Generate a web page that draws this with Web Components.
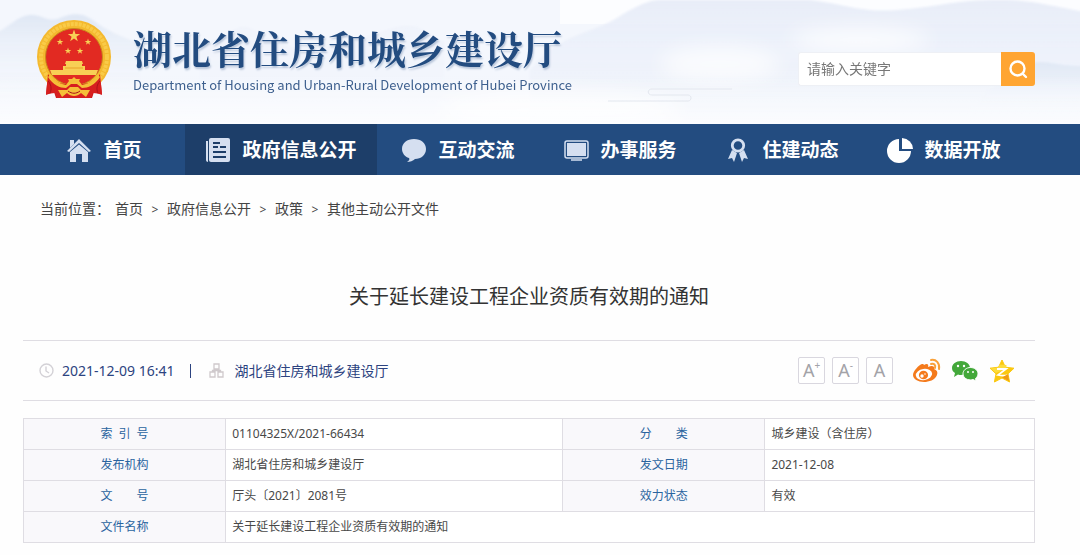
<!DOCTYPE html>
<html lang="zh-CN">
<head>
<meta charset="utf-8">
<meta name="viewport" content="width=device-width, initial-scale=1">
<title>关于延长建设工程企业资质有效期的通知</title>
<style>
  body {
    margin: 0;
    background: #fefefe;
    color: #444;
    font-family: "Noto Sans", "Noto Sans CJK SC", sans-serif;
    font-size: 14px;
    line-height: 20px;
    --edge-left: 23px;
    --edge-right: 45px;
    --rule: #dfdde3;
    --navy: #234c80;
  }
</style>
</head>
<body>
<site-header></site-header>
<site-nav></site-nav>
<main>
  <bread-crumb></bread-crumb>
  <notice-article>
    <span slot="title">关于延长建设工程企业资质有效期的通知</span>
    <article-meta></article-meta>
    <info-table></info-table>
  </notice-article>
</main>

<template id="t-emblem">
  <style>
    :host { display: block; width: 74px; height: 80px; flex: none; }
    svg { display: block; }
  </style>
  <svg width="74" height="80" viewBox="0 0 74 80" role="img" aria-label="国徽">
    <defs>
      <path id="star" d="M0-10 2.3-3.1 9.5-3.1 3.7 1.2 5.9 8.1 0 3.8-5.9 8.1-3.7 1.2-9.5-3.1-2.3-3.1Z"/>
    </defs>
    <path d="M11 55 9 76l8-3 2 6h36l2-6 8 3-2-21Z" fill="#c91a1c"/>
    <circle cx="37" cy="38" r="37" fill="#f4b92f"/>
    <circle cx="37" cy="38" r="33" fill="none" stroke="#f9cb48" stroke-width="4" stroke-dasharray="3 1"/>
    <circle cx="37" cy="38" r="28.500" fill="#e22a22" stroke="#c98a1c"/>
    <g fill="#f8cf55">
      <use href="#star" transform="translate(37 17) scale(.65)"/>
      <use href="#star" transform="translate(23 23) scale(.35)"/>
      <use href="#star" transform="translate(51 23) scale(.35)"/>
      <use href="#star" transform="translate(31 32) scale(.35)"/>
      <use href="#star" transform="translate(43 32) scale(.35)"/>
      <path d="M29 42h16l1 3H28ZM29 45h16v2h3v4h13l-2 5H15l-2-5h13v-4h3Z"/>
    </g>
    <path d="M28 49h18" stroke="#e9a22b"/>
    <path d="M11 55c5 8 12 10 19 10l14 0c7 0 14-2 19-10l2 20-9-1-2 5H20l-2-5-9 1Z" fill="#d71f1f"/>
    <path d="M13 56c5 7 11 9 16 10l3-4-1-2h4l2-2 2 2h4l-1 2 3 4c5-1 11-3 16-10l2 2c-5 8-12 11-18 11l-5-4H34l-5 4c-6 0-13-3-18-11Z" fill="#f5bf38"/>
    <path d="M21 71h9l3-3h8l3 3h9l-4 7-5-4c-4 4-10 4-14 0l-5 4Z" fill="#f5bf38"/>
    <path d="M11 62c3 3 4 8 2 12M63 62c-3 3-4 8-2 12M31 72c4 3 8 3 12 0" fill="none" stroke="#a91219"/>
  </svg>
</template>

<template id="t-header">
  <style>
    :host { display: block; position: relative; overflow: hidden; background: #f4f7fd; }
    .scene { position: absolute; inset: 0; width: 100%; height: 100%; }
    header {
      position: relative; display: flex; align-items: center; justify-content: space-between;
      min-height: 124px; box-sizing: border-box; padding: 0 var(--edge-right) 0 37px;
    }
    .brand { display: flex; align-items: flex-start; gap: 22px; color: var(--navy); padding-bottom: 6px; }
    h1 {
      margin: 0; font: 700 39px/56px "Noto Serif CJK SC", "Noto Sans CJK SC", serif;
      text-shadow: 1px 2px 2px #b9c6da; white-space: nowrap;
    }
    p { margin: 0; font: 400 13px/20px "Noto Sans CJK SC", sans-serif; color: #3d5f8e; white-space: nowrap; }
    form { display: flex; height: 34px; width: 237px; margin-top: 14px; }
    input {
      flex: 1; min-width: 0; box-sizing: border-box; border: 1px solid #eef0f5; border-right: 0;
      border-radius: 3px 0 0 3px; background: #fff; padding: 0 8px; font: inherit; color: #444; outline: 0;
    }
    input::placeholder { color: #777; opacity: 1; }
    button {
      width: 34px; border: 0; padding: 0; background: #ffa532; border-radius: 0 3px 3px 0;
      display: grid; place-items: center;
    }
  </style>
  <svg class="scene" viewBox="0 0 1080 124" preserveAspectRatio="none" aria-hidden="true">
    <defs>
      <linearGradient id="m" x2="0" y2="1"><stop stop-color="#dfe7f4"/><stop offset="1" stop-color="#f6f9fe" stop-opacity="0"/></linearGradient>
      <linearGradient id="n" x2="0" y2="1"><stop stop-color="#e8edf8"/><stop offset="1" stop-color="#eef3fc" stop-opacity=".3"/></linearGradient>
      <linearGradient id="w" x2="0" y2="1"><stop offset=".6" stop-color="#fff" stop-opacity="0"/><stop offset="1" stop-color="#fff" stop-opacity=".7"/></linearGradient>
      <filter id="soft"><feGaussianBlur stdDeviation="1"/></filter>
      <filter id="mist" x="-30%" y="-100%" width="160%" height="300%"><feGaussianBlur stdDeviation="10"/></filter>
    </defs>
    <path d="M560 0h520v24H560Z" fill="#fcfdff"/>
    <g filter="url(#soft)">
      <path d="M-5 34C10 26 18 16 30 15s18 8 30 3 22-6 34 3 26 16 46 22v60H-5Z" fill="url(#m)"/>
      <path d="M200 45c20-4 34-18 44-18s18 12 40 18 60 0 100-14 40 6 60 10v50H200Z" fill="url(#n)" opacity=".4"/>
      <path d="M530 70c30-38 60-34 90-54 20-12 30-16 40-16h150c20 2 40 8 60 10s50-2 75-6 40-4 60-4 40 4 80 12v120H530Z" fill="url(#n)"/>
      <path d="M970 110c20-20 40-44 60-47s25 3 55 3v50H970Z" fill="url(#m)"/>
    </g>
    <g filter="url(#mist)" fill="#fff">
      <ellipse cx="720" cy="64" rx="60" ry="18" opacity=".7"/>
      <ellipse cx="860" cy="40" rx="70" ry="12" opacity=".8"/>
      <ellipse cx="560" cy="110" rx="120" ry="20" opacity=".7"/>
    </g>
    <rect width="1080" height="124" fill="url(#w)"/>
    <path d="M608 101h80c4 0 4-6 0-6h-36c-5 0-5-6 0-6h80" fill="none" stroke="#e3e7ee"/>
  </svg>
  <header>
    <div class="brand">
      <state-emblem></state-emblem>
      <div>
        <h1>湖北省住房和城乡建设厅</h1>
        <p lang="en">Department of Housing and Urban-Rural Development of Hubei Province</p>
      </div>
    </div>
    <form role="search">
      <input type="text" placeholder="请输入关键字" aria-label="请输入关键字">
      <button type="button" aria-label="搜索">
        <svg width="20" height="20" viewBox="0 0 20 20" fill="none" stroke="#fff" stroke-width="2.400" stroke-linecap="round"><circle cx="9.500" cy="9.500" r="7"/><path d="m15 15 3 3"/></svg>
      </button>
    </form>
  </header>
</template>

<template id="t-nav">
  <style>
    :host { display: block; background: var(--navy); }
    nav {
      display: grid; grid-template-columns: 162fr 192fr 162fr 162fr 162fr 162fr;
      padding: 0 55px 0 var(--edge-left);
    }
  </style>
  <nav aria-label="主导航">
    <nav-item icon="home">首页</nav-item>
    <nav-item icon="news" active>政府信息公开</nav-item>
    <nav-item icon="chat">互动交流</nav-item>
    <nav-item icon="screen">办事服务</nav-item>
    <nav-item icon="medal">住建动态</nav-item>
    <nav-item icon="pie">数据开放</nav-item>
  </nav>
</template>

<template id="t-nav-item">
  <style>
    :host { display: block; }
    :host([active]) { background: #1d3e69; }
    a {
      display: flex; align-items: center; justify-content: center; gap: 11px; height: 51px;
      color: #fff; text-decoration: none; white-space: nowrap;
      font: 700 19px/28px "Noto Sans CJK SC", sans-serif;
    }
    span { padding-bottom: 2px; }
    svg { flex: none; width: 26px; height: 26px; }
  </style>
  <a href="#"><svg viewBox="0 0 26 26" aria-hidden="true"></svg><span><slot></slot></span></a>
</template>

<template id="t-crumb">
  <style>
    :host { display: block; padding: 24px var(--edge-right) 0 40px; }
    nav { display: flex; }
    span { width: 75px; }
    ol { display: flex; margin: 0; padding: 0; list-style: none; }
    li + li::before { content: ">"; display: inline-block; width: 24px; text-align: center; font-size: 12px; }
    a { color: inherit; text-decoration: none; }
  </style>
  <nav aria-label="面包屑">
    <span>当前位置：</span>
    <ol>
      <li><a href="#">首页</a></li>
      <li><a href="#">政府信息公开</a></li>
      <li><a href="#">政策</a></li>
      <li><a href="#">其他主动公开文件</a></li>
    </ol>
  </nav>
</template>

<template id="t-article">
  <style>
    :host { display: block; padding: 0 var(--edge-right) 12px var(--edge-left); }
    h2 { margin: 0; padding: 62px 0 28px; text-align: center; font-size: 20px; line-height: 30px; font-weight: 400; color: #333; }
  </style>
  <article>
    <h2><slot name="title"></slot></h2>
    <slot></slot>
  </article>
</template>

<template id="t-meta">
  <style>
    :host {
      display: flex; align-items: center; justify-content: space-between; box-sizing: border-box;
      min-height: 61px; padding: 0 20px 0 16px; margin-bottom: 17px;
      border-top: 1px solid var(--rule); border-bottom: 1px solid var(--rule);
      color: #2c4380;
    }
    div { display: flex; align-items: center; }
    .info { gap: 8px; }
    .bar { width: 1px; height: 14px; margin: 0 10px 0 7px; background: #2c4380; }
    .org { margin-left: 3px; }
    .sizes { gap: 7px; }
    .share { gap: 10px; margin-left: 20px; }
    .sizes button {
      width: 27px; height: 27px; box-sizing: border-box; padding: 0; border: 1px solid #d9d7df; border-radius: 2px;
      background: #fff; color: #a3a3a8; font: 400 18px/24px "Noto Sans", sans-serif;
      display: flex; justify-content: center;
    }
    sup { font-size: 10px; line-height: 14px; vertical-align: baseline; }
    .share a, svg { display: block; }
  </style>
  <div class="info">
    <svg width="15" height="15" viewBox="0 0 15 15" fill="none" stroke="#d3d1d6" stroke-width="1.400" aria-hidden="true"><circle cx="7.500" cy="7.500" r="6.500"/><path d="M7 3.500V8l3 2"/></svg>
    <time datetime="2021-12-09T16:41">2021-12-09 16:41</time>
    <i class="bar"></i>
    <svg width="15" height="15" viewBox="0 0 15 15" fill="none" stroke="#cfc9cc" stroke-width="1.300" aria-hidden="true"><path d="M5 1h5v5H5ZM1 9h5v5H1ZM9 9h5v5H9ZM7.500 6v2M3.500 9V7.500h8V9"/></svg>
    <span class="org">湖北省住房和城乡建设厅</span>
  </div>
  <div>
    <div class="sizes">
      <button type="button" aria-label="放大字体">A<sup>+</sup></button>
      <button type="button" aria-label="缩小字体">A<sup>-</sup></button>
      <button type="button" aria-label="默认字体">A</button>
    </div>
    <div class="share">
      <a href="#" aria-label="微博">
        <svg width="28" height="26" viewBox="0 0 28 26">
          <path d="M11 7c3-2 5-1 4 2 4-2 7-1 6 2 3 1 4 3 3 6-2 5-8 7-13 7-6 0-11-3-11-7C0 13 6 7 9 6c1 0 2 0 2 1Z" fill="#f47a1c"/>
          <ellipse cx="11" cy="16.500" rx="8.200" ry="5.600" fill="#fff" transform="rotate(-8 11 16.500)"/>
          <ellipse cx="10.500" cy="17" rx="4.600" ry="4.300" fill="#f47a1c"/>
          <circle cx="9" cy="18" r="1.700" fill="#fff"/><circle cx="12" cy="16" r=".8" fill="#fff"/>
          <path d="M18 2c5-1 9 3 8 9M18 6c3-1 5 1 4 4" fill="none" stroke="#f9a13a" stroke-width="2" stroke-linecap="round"/>
        </svg>
      </a>
      <a href="#" aria-label="微信">
        <svg width="28" height="24" viewBox="0 0 28 24">
          <path d="M10 2c5 0 9 3 9 7s-4 7-9 7c-1 0-2 0-3-.500L3 18l1-4c-2-1-3-3-3-5 0-4 4-7 9-7Z" fill="#43a83a"/>
          <circle cx="7" cy="7" r="1.200" fill="#fff"/><circle cx="13" cy="7" r="1.200" fill="#fff"/>
          <path d="M19.500 8.500c4 0 7.500 2.700 7.500 6.300 0 2-1 3.400-2.500 4.600l.6 2.600-3-1.500c-1 .3-1.700.4-2.600.4-4.200 0-7.500-2.600-7.500-6.100s3.300-6.300 7.500-6.300Z" fill="#43a83a" stroke="#fff"/>
          <circle cx="17" cy="13" r="1" fill="#fff"/><circle cx="22" cy="13" r="1" fill="#fff"/>
        </svg>
      </a>
      <a href="#" aria-label="QQ空间">
        <svg width="26" height="26" viewBox="0 0 26 26">
          <path d="m13 2 3.400 7.200 8.600 1-6 5.600 1.600 8.200-7.600-4-7.600 4L7 15.800l-6-5.600 8.600-1Z" fill="#fbc80f" stroke="#fbc80f" stroke-linejoin="round"/>
          <path d="M1.500 10.500 9 9.500l1.500-3 7 .5-.5 4-10 4Z" fill="#fddc3c"/>
          <path d="M8 11h9l-8 6c4 1 7 1 10 0" fill="none" stroke="#fff" stroke-width="1.800"/>
          <path d="m19 16 1 7-7-3.500Z" fill="#f09b12"/>
        </svg>
      </a>
    </div>
  </div>
</template>

<template id="t-table">
  <style>
    :host { display: block; }
    table { width: 100%; border-collapse: collapse; table-layout: fixed; font-size: 12px; line-height: 18px; color: #484848; }
    th, td { border: 1px solid var(--rule); padding: 6px; box-sizing: border-box; height: 31px; }
    th { background: #f9f8fb; font-weight: 400; color: #2a649f; }
    td { text-align: left; background: #fff; }
    th span { display: block; width: 48px; margin: 0 auto; text-align-last: justify; white-space: nowrap; }
    .k { width: 20%; }
    .v { width: calc(100% / 3); }
  </style>
  <table>
    <colgroup><col class="k"><col class="v"><col class="k"><col></colgroup>
    <tbody>
      <tr><th scope="row"><span>索 引 号</span></th><td>01104325X/2021-66434</td><th scope="row"><span>分 类</span></th><td>城乡建设（含住房）</td></tr>
      <tr><th scope="row"><span>发布机构</span></th><td>湖北省住房和城乡建设厅</td><th scope="row"><span>发文日期</span></th><td>2021-12-08</td></tr>
      <tr><th scope="row"><span>文 号</span></th><td>厅头〔2021〕2081号</td><th scope="row"><span>效力状态</span></th><td>有效</td></tr>
      <tr><th scope="row"><span>文件名称</span></th><td colspan="3">关于延长建设工程企业资质有效期的通知</td></tr>
    </tbody>
  </table>
</template>

<script>
  class TemplateElement extends HTMLElement {
    constructor() {
      super();
      const template = document.getElementById(this.constructor.template);
      this.attachShadow({ mode: "open" }).append(template.content.cloneNode(true));
    }
  }

  const NAV_ICONS = {
    home: '<g fill="#d5dff0"><path d="M4 3h4v4l-4 4Z"/><path d="M13 2 25 14l-2 1L13 6 3 15l-2-1Z"/><path d="M13 7.500 22 15v10h-6v-8h-6v8H4V15Z"/></g>',
    news: '<path d="M3 4H1v19c0 1 1 2 2 2Z" fill="#d5dff0"/><rect x="4" y="1" width="21" height="24" rx="2" fill="#d5dff0"/><path d="M8 6h7M8 10h5M8 15h13M8 20h13M15 10h6" stroke="#1d3e69" stroke-width="2"/>',
    chat: '<path d="M13 2c7 0 12 4 12 10s-5 10-11 10c-2 2-5 3-8 3 2-1 3-3 2-4-4-1-7-5-7-9C1 6 6 2 13 2Z" fill="#d5dff0"/>',
    screen: '<rect x="2" y="4" width="23" height="17" rx="2" fill="none" stroke="#d5dff0" stroke-width="1.500"/><rect x="4" y="6" width="19" height="13" fill="#d5dff0"/><path d="M8 23h11" stroke="#d5dff0" stroke-width="1.500"/>',
    medal: '<circle cx="13" cy="8.500" r="5.700" fill="none" stroke="#d5dff0" stroke-width="2.800"/><path d="m7 13-4 9 4-1 2 4 3-9ZM19 13l4 9-4-1-2 4-3-9Z" fill="#d5dff0"/>',
    pie: '<path d="M12 2v12h12A12 12 0 1 1 12 2Z" fill="#fff"/><path d="M15 1a12 11 0 0 1 11 11H15Z" fill="#fff"/>'
  };

  customElements.define("state-emblem", class extends TemplateElement { static template = "t-emblem"; });
  customElements.define("site-header", class extends TemplateElement { static template = "t-header"; });
  customElements.define("nav-item", class extends TemplateElement {
    static template = "t-nav-item";
    connectedCallback() {
      this.shadowRoot.querySelector("svg").innerHTML = NAV_ICONS[this.getAttribute("icon")] || "";
      if (this.hasAttribute("active")) this.shadowRoot.querySelector("a").setAttribute("aria-current", "page");
    }
  });
  customElements.define("site-nav", class extends TemplateElement { static template = "t-nav"; });
  customElements.define("bread-crumb", class extends TemplateElement { static template = "t-crumb"; });
  customElements.define("notice-article", class extends TemplateElement { static template = "t-article"; });
  customElements.define("article-meta", class extends TemplateElement { static template = "t-meta"; });
  customElements.define("info-table", class extends TemplateElement { static template = "t-table"; });
</script>
</body>
</html>
